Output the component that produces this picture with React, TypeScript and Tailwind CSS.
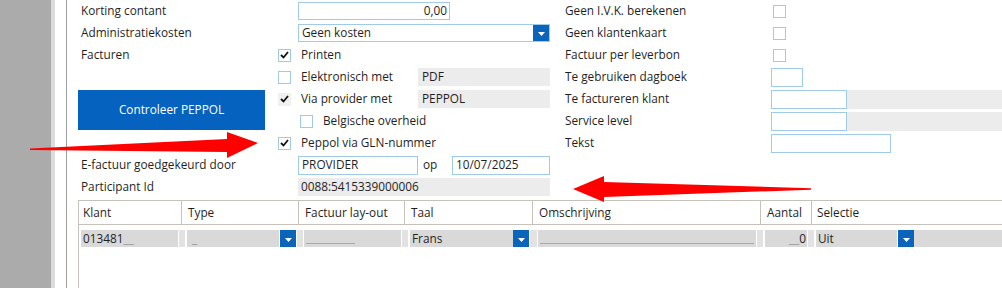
import React from "react";

const Check = () => (
  <svg width="9" height="8" viewBox="0 0 9 8" className="block">
    <path d="M1 4 L3.5 6.5 L8 1" fill="none" stroke="#111" strokeWidth="1.8" />
  </svg>
);

const Box = ({ checked = false, disabled = false }: { checked?: boolean; disabled?: boolean }) => (
  <div
    className={
      disabled
        ? "w-[13px] h-[13px] bg-[#f0f0f0] flex items-center justify-center"
        : "w-[13px] h-[13px] border border-[#9fcbe9] bg-white flex items-center justify-center"
    }
  >
    {checked && <Check />}
  </div>
);

const Drop = () => (
  <div className="w-[16px] h-full bg-[#0a64b9] flex items-center justify-center">
    <svg width="7" height="4" viewBox="0 0 7 4" className="block mt-[2px]">
      <path d="M0 0 L7 0 L3.5 4 Z" fill="#fff" />
    </svg>
  </div>
);

const Stub = ({ w = "w-[6px]" }: { w?: string }) => <div className={`${w} h-full bg-[#e2e2e2]`} />;

export default function App() {
  return (
    <div className="relative w-[1002px] h-[288px] overflow-hidden bg-white flex text-[11.8px] leading-none text-[#1f1f1f] font-['Open_Sans','Noto_Sans',sans-serif]">
      <div className="w-[51px] h-full bg-[#ababab]" />
      <div className="w-[4px] h-full bg-[#dcdcdc]" />
      <div className="w-[11px] h-full bg-white" />
      <div className="w-[1px] h-full bg-[#a0a0a0]" />
      <div className="flex-1 flex flex-col">
        {/* form */}
        <div className="flex h-[200px]">
          {/* left label column x67-278 */}
          <div className="w-[211px] flex flex-col">
            <div className="h-[22px] flex items-center pl-[14px]">Korting contant</div>
            <div className="h-[22px] flex items-center pl-[14px]">Administratiekosten</div>
            <div className="h-[22px] flex items-center pl-[14px]">Facturen</div>
            <div className="h-[22px]" />
            <div className="h-[44px] pl-[11px] pt-[2px]">
              <div className="w-[187px] h-[40px] bg-[#0563bf] text-white flex items-center justify-center">
                Controleer PEPPOL
              </div>
            </div>
            <div className="h-[22px]" />
            <div className="h-[22px] flex items-center pl-[14px]">E-factuur goedgekeurd door</div>
            <div className="h-[22px] flex items-center pl-[14px]">Participant Id</div>
          </div>
          {/* controls column x278-560 */}
          <div className="w-[282px] flex flex-col">
            <div className="h-[22px] flex items-center pl-[20px]">
              <div className="w-[152px] h-[18px] border border-[#9fcbe9] flex items-center justify-end pr-[2px]">0,00</div>
            </div>
            <div className="h-[22px] flex items-center pl-[20px]">
              <div className="w-[252px] h-[18px] border border-[#9fcbe9] flex items-center">
                <div className="flex-1 pl-[3px]">Geen kosten</div>
                <Drop />
              </div>
            </div>
            <div className="h-[22px] flex items-center">
              <Box checked />
              <div className="ml-[10px]">Printen</div>
            </div>
            <div className="h-[22px] flex items-center">
              <Box />
              <div className="ml-[10px] w-[117px]">Elektronisch met</div>
              <div className="w-[132px] h-[18px] bg-[#ececec] flex items-center pl-[4px]">PDF</div>
            </div>
            <div className="h-[22px] flex items-center">
              <Box checked disabled />
              <div className="ml-[10px] w-[117px]">Via provider met</div>
              <div className="w-[132px] h-[18px] bg-[#ececec] flex items-center pl-[4px]">PEPPOL</div>
            </div>
            <div className="h-[22px] flex items-center pl-[22px]">
              <Box />
              <div className="ml-[10px]">Belgische overheid</div>
            </div>
            <div className="h-[22px] flex items-center">
              <Box checked />
              <div className="ml-[10px]">Peppol via GLN-nummer</div>
            </div>
            <div className="h-[22px] flex items-center pl-[20px]">
              <div className="w-[120px] h-[19px] border border-[#9fcbe9] flex items-center pl-[3px]">PROVIDER</div>
              <div className="w-[34px] pl-[5px]">op</div>
              <div className="w-[98px] h-[19px] border border-[#9fcbe9] flex items-center pl-[3px]">10/07/2025</div>
            </div>
            <div className="h-[22px] flex items-center pl-[20px]">
              <div className="w-[252px] h-[18px] bg-[#ececec] flex items-center pl-[3px]">0088:5415339000006</div>
            </div>
          </div>
          {/* right section x560-1002 */}
          <div className="flex-1 flex flex-col">
            <div className="h-[22px] flex items-center">
              <div className="w-[213px] pl-[5px]">Geen I.V.K. berekenen</div>
              <Box />
            </div>
            <div className="h-[22px] flex items-center">
              <div className="w-[213px] pl-[5px]">Geen klantenkaart</div>
              <Box />
            </div>
            <div className="h-[22px] flex items-center">
              <div className="w-[213px] pl-[5px]">Factuur per leverbon</div>
              <Box />
            </div>
            <div className="h-[22px] flex items-center">
              <div className="w-[211px] pl-[5px]">Te gebruiken dagboek</div>
              <div className="w-[32px] h-[19px] border border-[#9fcbe9]" />
            </div>
            <div className="h-[22px] flex items-center">
              <div className="w-[211px] pl-[5px]">Te factureren klant</div>
              <div className="w-[76px] h-[19px] border border-[#9fcbe9]" />
              <div className="flex-1 h-[19px] bg-[#ececec]" />
            </div>
            <div className="h-[22px] flex items-center">
              <div className="w-[211px] pl-[5px]">Service level</div>
              <div className="w-[76px] h-[19px] border border-[#9fcbe9]" />
              <div className="flex-1 h-[19px] bg-[#ececec]" />
            </div>
            <div className="h-[22px] flex items-center">
              <div className="w-[211px] pl-[5px]">Tekst</div>
              <div className="w-[120px] h-[19px] border border-[#9fcbe9]" />
            </div>
          </div>
        </div>
        {/* table */}
        <div className="ml-[11px] flex-1 border-l border-[#c6c2ba] flex flex-col">
          <div className="h-[25px] border-t border-b border-[#c6c2ba] flex">
            <div className="w-[103px] border-r border-[#c6c2ba] flex items-center pl-[4px]">Klant</div>
            <div className="w-[117px] border-r border-[#c6c2ba] flex items-center pl-[6px]">Type</div>
            <div className="w-[106px] border-r border-[#c6c2ba] flex items-center pl-[6px]">Factuur lay-out</div>
            <div className="w-[128px] border-r border-[#c6c2ba] flex items-center pl-[6px]">Taal</div>
            <div className="w-[228px] border-r border-[#c6c2ba] flex items-center pl-[6px]">Omschrijving</div>
            <div className="w-[51px] border-r border-[#c6c2ba] flex items-center pl-[6px]">Aantal</div>
            <div className="flex-1 flex items-center pl-[5px]">Selectie</div>
          </div>
          <div className="h-[17px] mt-[5px] flex pl-[2px]">
            <div className="w-[97px] h-full bg-[#d9d9d9] flex items-center pl-[2px]">
              013481<span className="text-[#9a9a9a]">__</span>
            </div>
            <div className="w-[1px]" />
            <Stub />
            <div className="w-[2px]" />
            <div className="w-[92px] h-full bg-[#d9d9d9] flex items-center pl-[5px] text-[#9a9a9a]">_</div>
            <div className="w-[1px]" />
            <Drop />
            <div className="w-[1px]" />
            <Stub />
            <div className="w-[1px]" />
            <div className="w-[97px] h-full bg-[#d9d9d9] flex items-end pl-[2px] pb-[3px]">
              <div className="w-[49px] h-[1px] bg-[#a9a9a9]" />
            </div>
            <div className="w-[1px]" />
            <Stub />
            <div className="w-[2px]" />
            <div className="w-[103px] h-full bg-[#d9d9d9] flex items-center pl-[2px]">Frans</div>
            <Drop />
            <div className="w-[1px]" />
            <Stub w="w-[7px]" />
            <div className="w-[1px]" />
            <div className="w-[218px] h-full bg-[#d9d9d9] flex items-end pl-[2px] pr-[2px] pb-[3px]">
              <div className="flex-1 h-[1px] bg-[#a9a9a9]" />
            </div>
            <div className="w-[1px]" />
            <Stub />
            <div className="w-[2px]" />
            <div className="w-[42px] h-full bg-[#d9d9d9] flex items-center justify-end pr-[1px]">
              <span className="text-[#9a9a9a]">__</span>0
            </div>
            <div className="w-[1px]" />
            <Stub />
            <div className="w-[2px]" />
            <div className="w-[81px] h-full bg-[#d9d9d9] flex items-center pl-[2px]">Uit</div>
            <div className="w-[1px]" />
            <Drop />
            <div className="flex-1 h-full bg-[#d9d9d9]" />
          </div>
        </div>
      </div>
      {/* red annotation arrows */}
      <svg className="absolute inset-0 pointer-events-none" width="1002" height="288">
        <polygon points="30,148.5 227,139 227,132 258,143 227,158 227,152 30,150" fill="#ff0000" />
        <polygon points="811,188.3 604,182 604,176 573,189 604,202 604,197 811,189.7" fill="#ff0000" />
      </svg>
    </div>
  );
}
